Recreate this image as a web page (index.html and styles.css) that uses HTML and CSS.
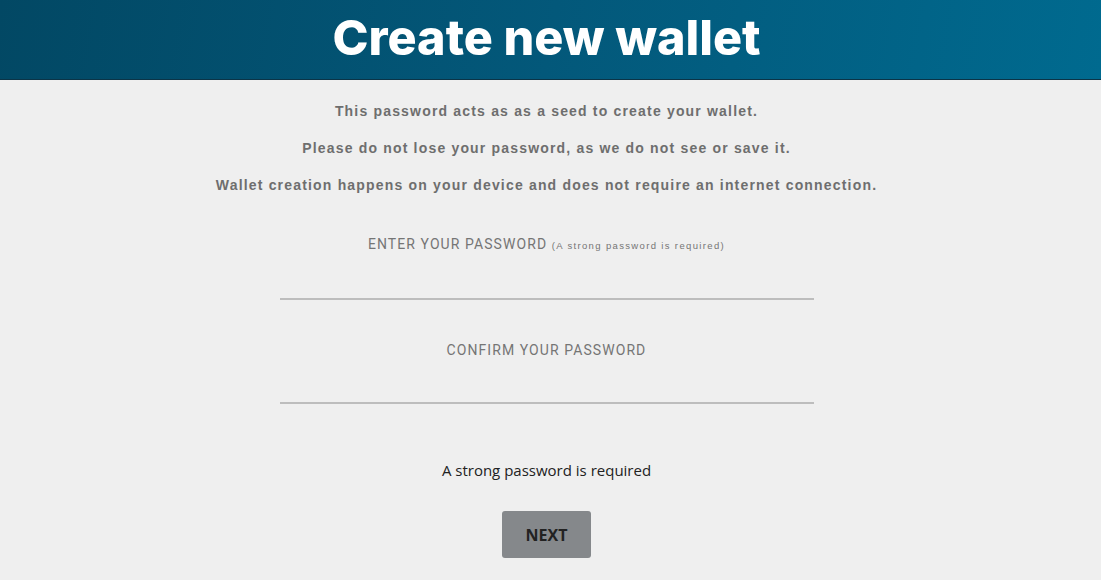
FILE: index.html
```html
<!DOCTYPE html>
<html lang="en">
<head>
<meta charset="utf-8">
<title>Create new wallet</title>
<link rel="stylesheet" href="styles.css">
</head>
<body>
<header class="hero">
  <h1 class="hero-title">Create new wallet</h1>
</header>
<main class="content">
  <div class="notes">
    <p class="note">This password acts as as a seed to create your wallet.</p>
    <p class="note">Please do not lose your password, as we do not see or save it.</p>
    <p class="note">Wallet creation happens on your device and does not require an internet connection.</p>
  </div>
  <div class="field">
    <label class="field-label">ENTER YOUR PASSWORD <span class="field-hint">(A strong password is required)</span></label>
    <div class="field-input"></div>
  </div>
  <div class="field">
    <label class="field-label">CONFIRM YOUR PASSWORD</label>
    <div class="field-input"></div>
  </div>
  <p class="status">A strong password is required</p>
  <button class="next-btn" type="button">NEXT</button>
</main>
</body>
</html>
```
FILE: styles.css
```css
html, body {
  margin: 0;
  padding: 0;
}
body {
  background: #efefef;
  width: 1101px;
  height: 580px;
  overflow: hidden;
}
.hero {
  height: 80px;
  background: linear-gradient(100deg, #024864 0%, #03587a 50%, #006a8f 100%);
  display: flex;
  justify-content: center;
  align-items: center;
  border-bottom: 1px solid #0b3447;
  box-sizing: border-box;
  padding-right: 8px;
}
.hero-title {
  margin: 0;
  color: #fff;
  font-family: "Inter", "Open Sans", sans-serif;
  font-weight: 800;
  font-size: 48.5px;
  line-height: 1;
  padding-bottom: 2px;
}
.content {
  display: flex;
  flex-direction: column;
  align-items: center;
  padding-right: 8px;
}
.notes {
  padding-top: 23px;
  display: flex;
  flex-direction: column;
  gap: 21px;
  align-items: center;
}
.note {
  margin: 0;
  font-family: "Liberation Sans", Arial, sans-serif;
  font-weight: bold;
  font-size: 14px;
  line-height: 16px;
  letter-spacing: 1.18px;
  color: #6e6e6e;
}
.field {
  width: 534px;
  display: flex;
  flex-direction: column;
  align-items: center;
}
.notes + .field {
  margin-top: 43px;
}
.field + .field {
  margin-top: 42px;
}
.field-label {
  font-family: "Roboto", sans-serif;
  font-size: 14px;
  line-height: 16px;
  letter-spacing: 1.08px;
  color: #757575;
}
.field-hint {
  font-family: "Liberation Sans", Arial, sans-serif;
  font-size: 9.5px;
  letter-spacing: 1.35px;
}
.field-input {
  width: 100%;
  margin-top: 44px;
  border-bottom: 2px solid #bdbdbd;
}
.status {
  margin: 56px 0 0;
  font-family: "Open Sans", sans-serif;
  font-size: 15px;
  line-height: 20px;
  color: #222;
}
.next-btn {
  margin-top: 31px;
  width: 89px;
  height: 47px;
  border: none;
  border-radius: 3px;
  background: #85888b;
  color: #222;
  font-family: "Open Sans", sans-serif;
  font-weight: 700;
  font-size: 16px;
  padding: 0;
}
```
